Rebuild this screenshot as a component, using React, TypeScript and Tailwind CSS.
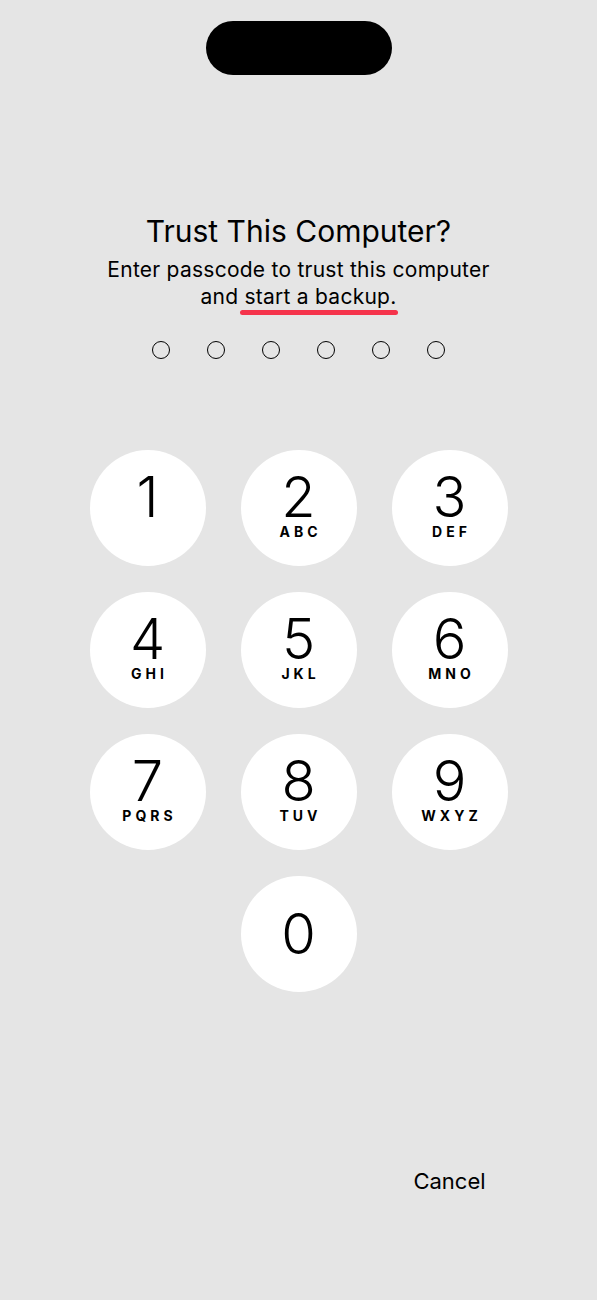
const keys = [
  { d: '1', l: '' },
  { d: '2', l: 'ABC' },
  { d: '3', l: 'DEF' },
  { d: '4', l: 'GHI' },
  { d: '5', l: 'JKL' },
  { d: '6', l: 'MNO' },
  { d: '7', l: 'PQRS' },
  { d: '8', l: 'TUV' },
  { d: '9', l: 'WXYZ' },
];

function Key({ d, l, solo }: { d: string; l: string; solo?: boolean }) {
  return (
    <button
      className={`w-[116px] h-[116px] rounded-full bg-white flex flex-col items-center ${
        solo ? 'pt-[33px]' : 'pt-[22px]'
      }`}
    >
      <span className="text-[56px] leading-[50px] font-light text-black">{d}</span>
      {l && (
        <span className="mt-[3px] text-[14px] leading-[14px] font-bold tracking-[4px] pl-[4px] text-black">{l}</span>
      )}
    </button>
  );
}

export default function App() {
  return (
    <div
      className="min-h-[1300px] w-full bg-[#e5e5e5] flex flex-col items-center text-black"
      style={{ fontFamily: 'Inter, "Liberation Sans", sans-serif' }}
    >
      {/* dynamic island */}
      <div className="mt-[21px] w-[186px] h-[54px] rounded-full bg-black" />

      <h1 className="mt-[138px] text-[30px] leading-[36px] font-normal">Trust This Computer?</h1>
      <p className="mt-[7px] text-[21px] leading-[27px] tracking-[0.25px] text-center">
        Enter passcode to trust this computer
        <br />
        and{' '}
        <span className="relative">
          start a backup.
          <span className="absolute left-[-4px] right-[-2px] bottom-[-6px] h-[5px] rounded-full bg-[#f5334b]" />
        </span>
      </p>

      {/* passcode dots */}
      <div className="mt-[31px] flex gap-[37px]">
        {[0, 1, 2, 3, 4, 5].map(i => (
          <div key={i} className="w-[18px] h-[18px] rounded-full border-[1.75px] border-black" />
        ))}
      </div>

      {/* keypad */}
      <div className="mt-[91px] grid grid-cols-[116px_116px_116px] gap-x-[35px] gap-y-[26px]">
        {keys.map(k => (
          <Key key={k.d} d={k.d} l={k.l} />
        ))}
        <div />
        <Key d="0" l="" solo />
        <div />
        <div />
        <div />
        <button className="mt-[149px] text-[22px] leading-[28px] text-center">Cancel</button>
      </div>
    </div>
  );
}
